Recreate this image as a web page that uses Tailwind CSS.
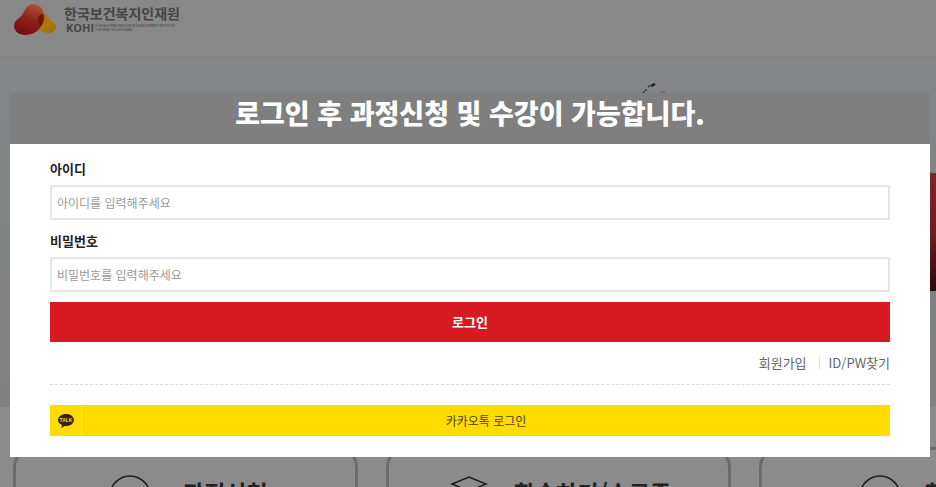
<!DOCTYPE html>
<html lang="ko">
<head>
    <meta charset="UTF-8">
    <meta name="viewport" content="width=device-width, initial-scale=1.0">
    <title>한국보건복지인재원</title>
    <script src="https://cdn.jsdelivr.net/npm/@tailwindcss/browser@4"></script>
</head>
<body class="relative h-screen overflow-hidden bg-[#8b8b8b] font-['Noto_Sans_CJK_KR',sans-serif] text-[13px] text-[#222]">
    <header class="h-[57px] border-b border-[#808080] bg-[#888888]">
        <a href="#" class="flex items-start pl-3 pt-1 text-[#444]">
            <svg class="h-8 w-12" viewBox="0 0 48 32" aria-hidden="true">
                <defs>
                    <linearGradient id="red" x1="0.7" y1="0" x2="0.35" y2="1">
                        <stop offset="0" stop-color="#ad5631"/>
                        <stop offset="0.5" stop-color="#8d211b"/>
                        <stop offset="1" stop-color="#760d14"/>
                    </linearGradient>
                    <linearGradient id="yellow" x1="0" y1="0" x2="1" y2="1">
                        <stop offset="0" stop-color="#a45b0b"/>
                        <stop offset="0.5" stop-color="#aa7d08"/>
                        <stop offset="1" stop-color="#a8670c"/>
                    </linearGradient>
                </defs>
                <path fill="url(#yellow)" d="M30 10c4-1 6 3 8 6 2 2 6 3 6 7s-4 6-8 6c-6 0-12-5-11-11 0-4 1-7 5-8z"/>
                <path fill="url(#red)" d="M21 0c6 0 11 5 11 12 0 10-7 19-19 19C7 31 2 27 2 22c0-6 5-7 8-11 3-5 5-11 11-11z"/>
                <path fill="#711509" d="M30 10l1 0c2 5 0 9-2 12-4-3-5-10 1-12z"/>
            </svg>
            <span class="pl-1">
                <span class="block text-[14px] leading-[18px] font-bold">한국보건복지인재원</span>
                <span class="flex items-center gap-px pl-0.5">
                    <span class="font-['Open_Sans',sans-serif] text-[11px] leading-[11px] font-bold">KOHI</span>
                    <span class="font-['Liberation_Sans',sans-serif] text-[3px] leading-[4px] whitespace-nowrap">KOREA HUMAN RESOURCE DEVELOPMENT INSTITUTE<br>FOR HEALTH &amp; WELFARE</span>
                </span>
            </span>
        </a>
    </header>

    <!-- main banner -->
    <section class="relative h-[350px] overflow-hidden bg-linear-to-b from-[#838587] to-[#808080] pt-9 pr-[6px] pl-[10px]">
        <svg class="absolute top-6 left-[640px] h-3 w-8" viewBox="0 0 32 12" aria-hidden="true">
            <path d="M3 12l4-4M8 6l3-2" fill="none" stroke="#333" stroke-width="1.5" stroke-dasharray="2 1"/>
            <path d="M11 5l4-2" stroke="#1c1c1c" stroke-width="2.5"/>
            <path d="M19 12q5-4 8 0z" fill="#707070"/>
        </svg>
        <div class="h-[314px] bg-[#7f7f7f]"></div>
        <div class="absolute top-[116px] right-0 h-[118px] w-16 bg-linear-to-b from-[#7c2629] via-[#6d1e20] to-[#2b0b0c]"></div>
    </section>

    <section class="flex gap-7 pt-10 pl-[13px]">
        <a href="#" class="flex h-24 w-[345px] shrink-0 gap-8 rounded-[20px] border-3 border-[#6b6b6b] pl-[93px] pt-6">
            <svg class="size-[42px]" viewBox="0 0 42 42" fill="none" stroke="#1c1c1c" stroke-width="1.500" aria-hidden="true"><circle cx="21" cy="22" r="20"/></svg>
            <span class="pt-0.5 text-[23px] leading-8 font-bold">과정신청</span>
        </a>
        <a href="#" class="flex h-24 w-[345px] shrink-0 gap-6 rounded-[20px] border-3 border-[#6b6b6b] pl-[59px] pt-6">
            <svg class="size-[42px]" viewBox="0 0 42 42" fill="none" stroke="#1c1c1c" stroke-width="1.500" aria-hidden="true"><path d="M4 10L21 3l17 7-17 7zM10 13v14q11 8 22 0V13"/></svg>
            <span class="pt-0.5 text-[23px] leading-8 font-bold">학습하기/수료증</span>
        </a>
        <a href="#" class="flex h-24 w-[345px] shrink-0 gap-6 rounded-[20px] border-3 border-[#6b6b6b] pl-[97px] pt-6">
            <svg class="size-[42px]" viewBox="0 0 42 42" fill="none" stroke="#1c1c1c" stroke-width="1.500" aria-hidden="true"><circle cx="21" cy="22" r="20"/></svg>
            <span class="pt-0.5 text-[23px] leading-8 font-bold">학습지원</span>
        </a>
    </section>

    <!-- login popup -->
    <div class="absolute inset-x-0 top-0 pt-[92px] pr-[6px] pl-[10px]" role="dialog" aria-labelledby="login-title">
        <h1 id="login-title" class="h-[52px] text-center text-[27px] leading-[42px] font-black text-white">로그인 후 과정신청 및 수강이 가능합니다.</h1>
        <form class="bg-white px-10 pt-4 pb-[21px]">
            <label for="user-id" class="block h-[25px] leading-[18px] font-bold">아이디</label>
            <input id="user-id" type="text" placeholder="아이디를 입력해주세요" class="block h-[35px] w-full border-2 border-[#e5e5e5] px-[5px] text-[12px] outline-none placeholder:text-[#999]">
            <label for="user-pw" class="mt-3 block h-[25px] leading-[18px] font-bold">비밀번호</label>
            <input id="user-pw" type="password" placeholder="비밀번호를 입력해주세요" class="block h-[35px] w-full border-2 border-[#e5e5e5] px-[5px] text-[12px] outline-none placeholder:text-[#999]">
            <button type="submit" class="mt-[10px] block h-10 w-full bg-[#d71921] font-bold text-white">로그인</button>
            <div class="flex h-[43px] items-center justify-end border-b border-dashed border-[#d9d9d9] text-[#666]">
                <a href="#">회원가입</a>
                <span class="mr-[9px] ml-3 h-3 w-px bg-[#ddd]"></span>
                <a href="#">ID/PW찾기</a>
            </div>
            <button type="button" class="mt-5 flex h-[31px] w-full items-center bg-[#ffdc00] text-[12px] text-[#4a4020]">
                <span class="flex h-full w-8 items-center justify-center border-r border-[#ffe54d]">
                    <svg class="h-[14px] w-4" viewBox="0 0 16 14" aria-hidden="true">
                        <path fill="#3b1e1e" d="M8 0c4.500 0 8 2.700 8 6s-3.500 6-8 6l-1.500-.1L3.500 14l.4-3C1.500 10 0 8.200 0 6c0-3.300 3.500-6 8-6z"/>
                        <text x="8" y="8" text-anchor="middle" font-family="Liberation Sans, sans-serif" font-size="5" font-weight="bold" fill="#ffdc00">TALK</text>
                    </svg>
                </span>
                <span class="grow text-center">카카오톡 로그인</span>
            </button>
        </form>
    </div>
</body>
</html>
